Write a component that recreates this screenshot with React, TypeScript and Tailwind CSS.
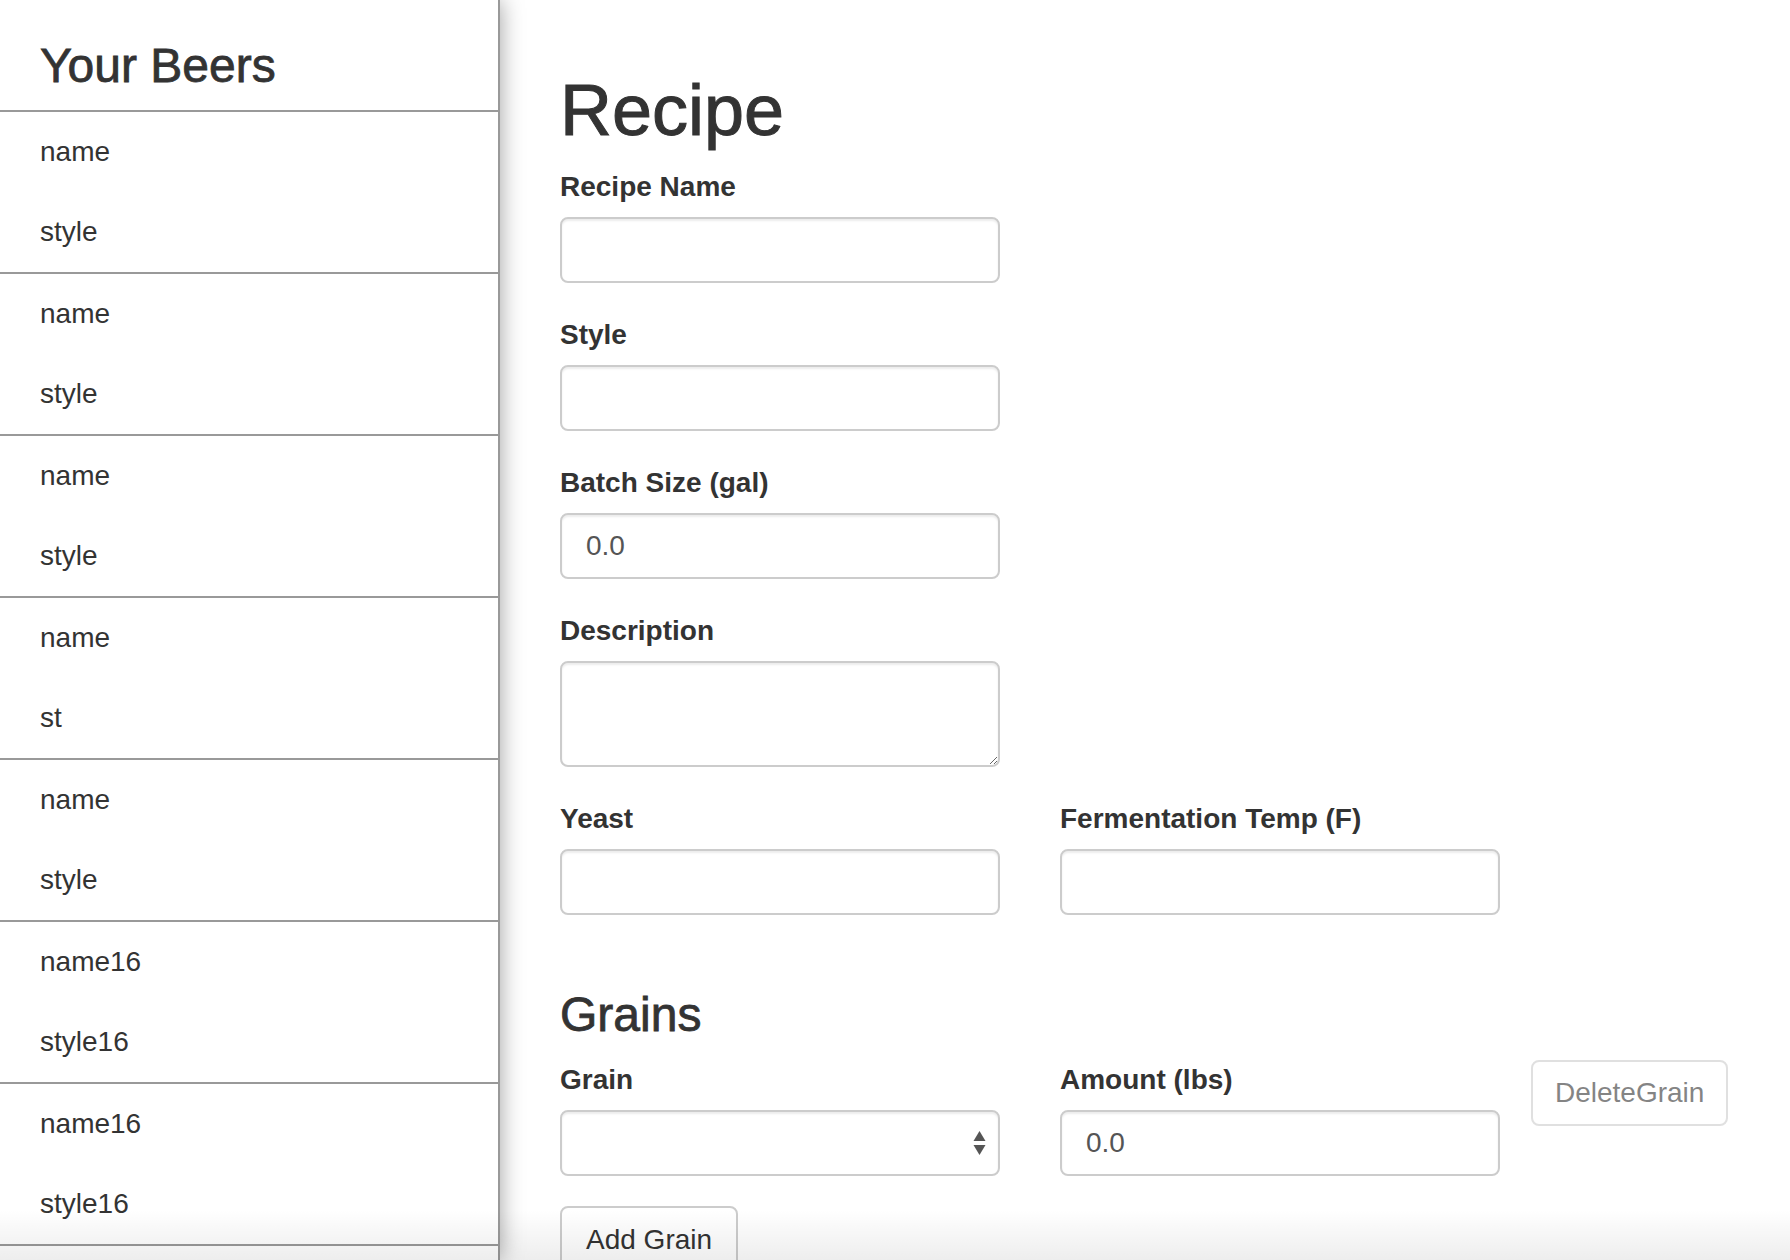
import type { ReactNode } from 'react';

const beers = [
  { name: 'name', style: 'style' },
  { name: 'name', style: 'style' },
  { name: 'name', style: 'style' },
  { name: 'name', style: 'st' },
  { name: 'name', style: 'style' },
  { name: 'name16', style: 'style16' },
  { name: 'name16', style: 'style16' },
];

const inputCls =
  'block w-full h-[66px] rounded-[8px] border-2 border-[#ccc] bg-white px-[24px] text-[28px] text-[#555] shadow-[inset_0_2px_2px_rgba(0,0,0,0.075)] outline-none';

function Label({ children }: { children: ReactNode }) {
  return <label className="block pt-[2px] mb-[10px] text-[28px] leading-[40px] font-bold text-[#333]">{children}</label>;
}

function Field({ label, value, className }: { label: string; value?: string; className?: string }) {
  return (
    <div className={`mb-[30px] ${className ?? 'w-[440px]'}`}>
      <Label>{label}</Label>
      <input className={inputCls} defaultValue={value ?? ''} />
    </div>
  );
}

function Sidebar() {
  return (
    <aside className="relative z-10 w-[500px] shrink-0 h-full bg-white border-r-2 border-[#999] shadow-[0_0_22px_rgba(0,0,0,0.38)] overflow-hidden">
      <div className="pt-[39px] pb-[18px] px-[40px] border-b-2 border-[#999]">
        <h3 className="text-[48px] leading-[53px] font-medium text-[#333] [-webkit-text-stroke:0.8px_#333]">Your Beers</h3>
      </div>
      {beers.map((b, i) => (
        <div key={i} className="border-b-2 border-[#999] px-[40px] text-[28px] text-[#333]">
          <div className="h-[80px] flex items-center">{b.name}</div>
          <div className="h-[80px] flex items-center">{b.style}</div>
        </div>
      ))}
    </aside>
  );
}

function SelectArrows() {
  return (
    <svg width="13" height="26" viewBox="0 0 13 26" className="absolute right-[14px] top-[20px] pointer-events-none">
      <path d="M6.5 1 L12.5 11 L0.5 11 Z" fill="#555" />
      <path d="M0.5 15 L12.5 15 L6.5 25 Z" fill="#555" />
    </svg>
  );
}

export default function App() {
  return (
    <div
      className="relative flex w-[1790px] h-[1260px] overflow-hidden bg-white text-[#333]"
      style={{ fontFamily: '"Liberation Sans", Arial, Helvetica, sans-serif' }}
    >
      <Sidebar />
      <main className="flex-1 pl-[60px] pt-[70px]">
        <h1 className="text-[72px] leading-[80px] font-medium mb-[15px] [-webkit-text-stroke:1px_#333]">Recipe</h1>
        <Field label="Recipe Name" />
        <Field label="Style" />
        <Field label="Batch Size (gal)" value="0.0" />
        <div className="mb-[30px] w-[440px]">
          <Label>Description</Label>
          <textarea className={`${inputCls} h-[106px] py-[12px] resize`} />
        </div>
        <div className="flex gap-[60px]">
          <Field label="Yeast" />
          <Field label="Fermentation Temp (F)" />
        </div>
        <h3 className="mt-[43px] text-[48px] leading-[53px] font-medium mb-[17px] [-webkit-text-stroke:0.8px_#333]">Grains</h3>
        <div className="flex items-start">
          <div className="mb-[30px] w-[440px]">
            <Label>Grain</Label>
            <div className="relative">
              <select className={`${inputCls} appearance-none`} defaultValue="">
                <option value=""></option>
              </select>
              <SelectArrows />
            </div>
          </div>
          <div className="ml-[60px] w-[440px]">
            <Label>Amount (lbs)</Label>
            <input className={inputCls} defaultValue="0.0" />
          </div>
          <button
            disabled
            className="ml-[31px] mt-[2px] h-[66px] px-[22px] rounded-[8px] border-2 border-[#ccc] bg-white text-[28px] text-[#333] opacity-60"
          >
            DeleteGrain
          </button>
        </div>
        <button className="h-[68px] px-[24px] rounded-[8px] border-2 border-[#ccc] bg-white text-[28px] leading-[40px] text-[#333]">
          Add Grain
        </button>
      </main>
      <div className="pointer-events-none absolute inset-x-0 bottom-0 z-20 h-[50px] bg-gradient-to-b from-transparent to-black/[0.07]" />
    </div>
  );
}
